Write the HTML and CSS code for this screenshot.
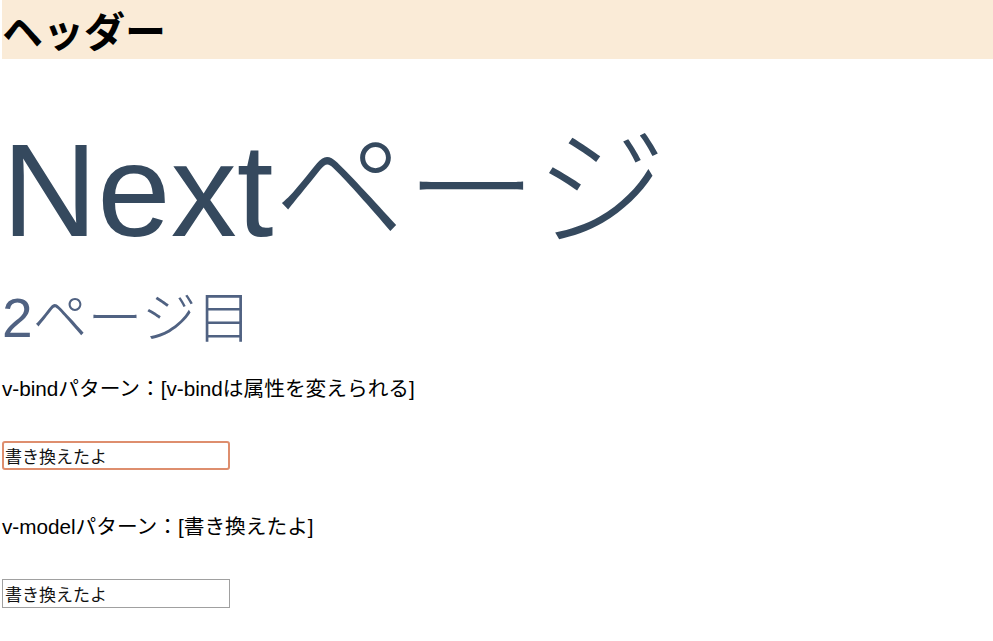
FILE: index.html
```html
<!DOCTYPE html>
<html lang="ja">
<head>
<meta charset="utf-8">
<title>Nextページ</title>
<link rel="stylesheet" href="styles.css">
</head>
<body>
<div class="app">
  <header class="site-header">
    <h1 class="site-title">ヘッダー</h1>
  </header>
  <main class="page">
    <h1 class="page-title">Nextページ</h1>
    <h2 class="page-subtitle">2ページ目</h2>
    <div class="demo">
      <p class="label">v-bindパターン：[v-bindは属性を変えられる]</p>
      <input class="text-input text-input--bound" type="text" value="書き換えたよ">
      <p class="label">v-modelパターン：[書き換えたよ]</p>
      <input class="text-input" type="text" value="書き換えたよ">
    </div>
  </main>
</div>
</body>
</html>
```

FILE: styles.css
```css
html, body {
  margin: 0;
  padding: 0;
  background: #ffffff;
}

body {
  font-family: "Liberation Sans", "Noto Sans CJK JP", sans-serif;
  color: #000000;
}

.app {
  padding-left: 2px;
}

.site-header {
  background: #faebd7;
  height: 59px;
}

.site-title {
  margin: 0;
  font-size: 41px;
  line-height: 59px;
  font-weight: 700;
  font-family: "Noto Sans CJK JP", sans-serif;
  white-space: nowrap;
}

.page {
  display: flex;
  flex-direction: column;
  align-items: flex-start;
}

.page-title {
  margin: 66px 0 0;
  font-size: 132px;
  line-height: 132px;
  font-weight: 300;
  color: #35495e;
  white-space: nowrap;
}

.page-subtitle {
  margin: 34px 0 0;
  font-size: 55px;
  line-height: 55px;
  font-weight: 300;
  color: #506282;
  white-space: nowrap;
}

.demo {
  margin-top: 31px;
  display: flex;
  flex-direction: column;
  align-items: flex-start;
}

.label {
  margin: 0 0 40px;
  font-size: 20.7px;
  line-height: 24px;
  white-space: nowrap;
}

.text-input {
  box-sizing: border-box;
  width: 228px;
  height: 29px;
  margin: 0 0 45px;
  padding: 0 2px;
  border: 1px solid #a0a0a0;
  border-radius: 0;
  background: #ffffff;
  font-family: "Noto Sans CJK JP", sans-serif;
  font-size: 17px;
  color: #111111;
  outline: none;
}

.text-input--bound {
  border: 2px solid #de8e6e;
  border-radius: 3px;
  padding: 0 1px;
}
```
